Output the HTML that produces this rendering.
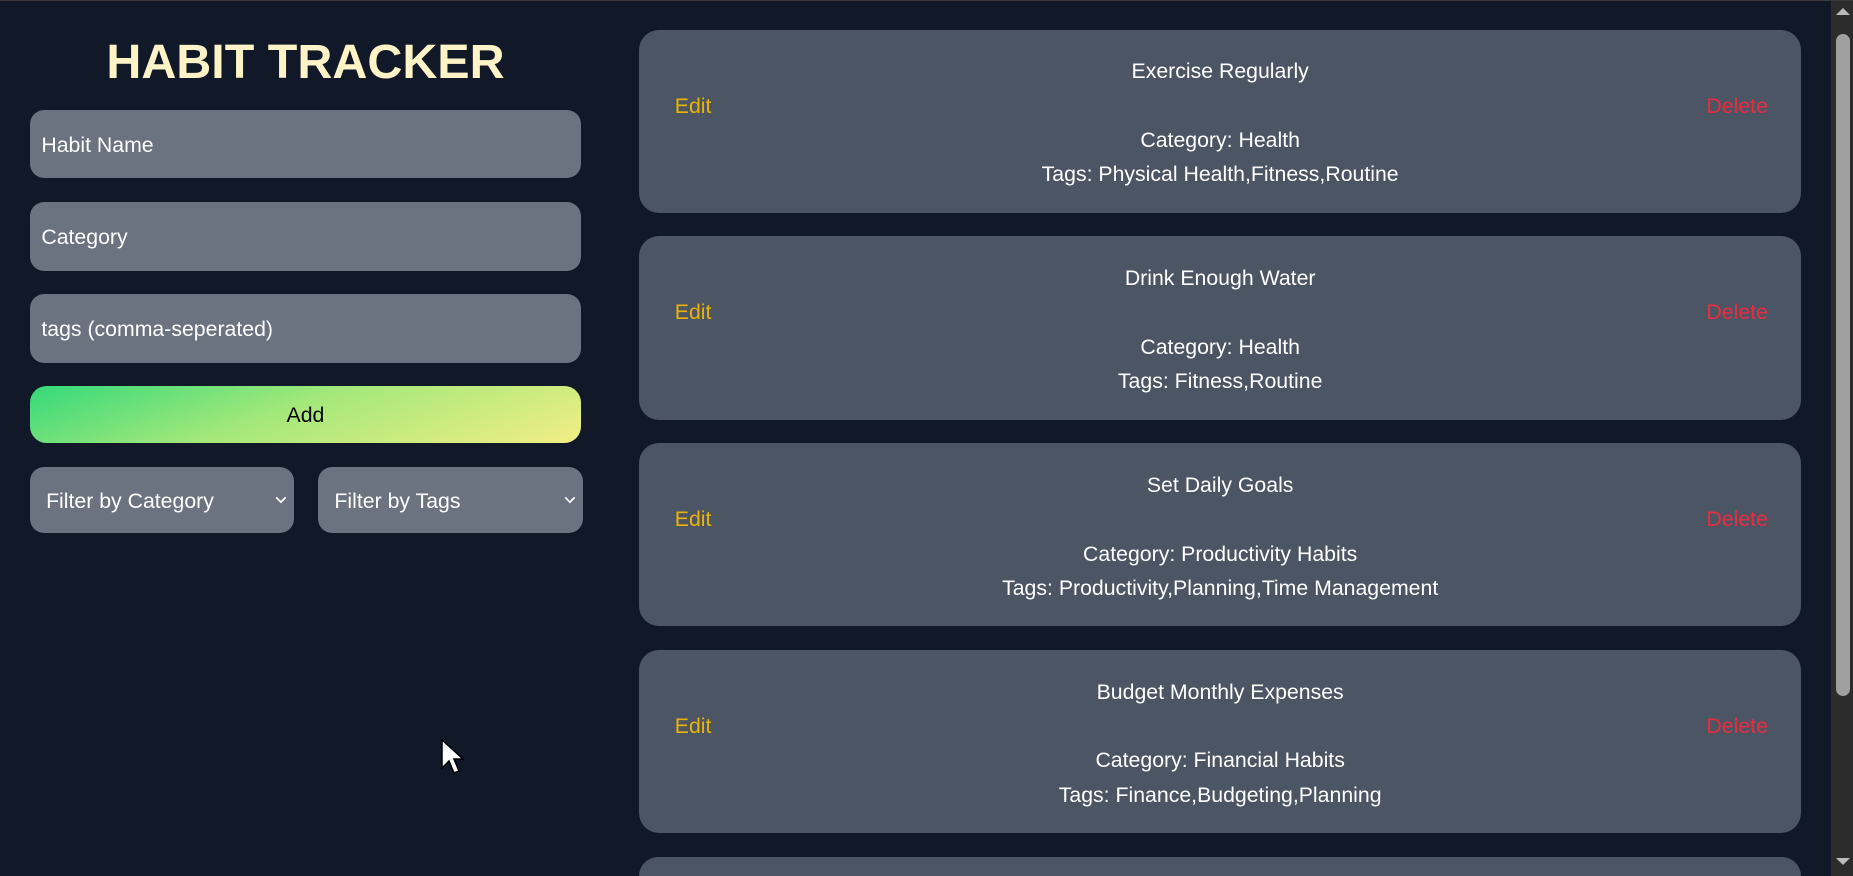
<!DOCTYPE html>
<html><head><meta charset="utf-8"><style>
html,body{margin:0;padding:0;background:#111827;overflow:hidden;width:1853px;height:876px;position:relative}
#w{zoom:1.18176;position:absolute;left:0;top:0;width:1568px;height:741px;overflow:hidden;font-family:"Liberation Sans",sans-serif;color:#fff}
h1{position:absolute;left:25px;width:467px;top:27px;margin:0;text-align:center;font-size:41px;line-height:52px;font-weight:bold;color:#fef3c7}
.in{position:absolute;left:25px;width:467px;height:58px;background:#6b7280;border-radius:12px;font-size:18px;line-height:60px;box-sizing:border-box;padding-left:10px}
.btn{position:absolute;left:25px;top:327px;width:467px;height:48px;border-radius:14px;background:linear-gradient(160deg,#34d97b 0%,#a3e87a 45%,#f2ee85 100%);color:#000;font-size:18px;line-height:50px;text-align:center}
.sel{position:absolute;top:395px;width:224px;height:56px;background:#6b7280;border-radius:12px;font-size:18px;line-height:59px;box-sizing:border-box;padding-left:14px}
.sel svg{position:absolute;right:6px;top:24px}
.card{position:absolute;left:541px;width:983px;height:155px;background:#4b5563;border-radius:17px;font-size:18px;text-align:center}
.card div{position:absolute;left:0;right:0;line-height:29px}
.e{position:absolute;left:30px;color:#eab308;line-height:29px;top:50px}
.d{position:absolute;right:28px;color:#ec2b41;line-height:29px;top:50px}
</style></head><body>
<div id="w">
<h1>HABIT TRACKER</h1>
<div class="in" style="top:93px">Habit Name</div>
<div class="in" style="top:171px">Category</div>
<div class="in" style="top:249px">tags (comma-seperated)</div>
<div class="btn">Add</div>
<div class="sel" style="left:25px">Filter by Category<svg width="10" height="8" viewBox="0 0 10 8"><path d="M1 2l4 4 4-4" stroke="#fff" stroke-width="1.5" fill="none"/></svg></div>
<div class="sel" style="left:269px">Filter by Tags<svg width="10" height="8" viewBox="0 0 10 8"><path d="M1 2l4 4 4-4" stroke="#fff" stroke-width="1.5" fill="none"/></svg></div>

<div class="card" style="top:25px"><div style="top:21px">Exercise Regularly</div><span class="e">Edit</span><span class="d">Delete</span><div style="top:79px">Category: Health</div><div style="top:108px">Tags: Physical Health,Fitness,Routine</div></div>
<div class="card" style="top:200px"><div style="top:21px">Drink Enough Water</div><span class="e">Edit</span><span class="d">Delete</span><div style="top:79px">Category: Health</div><div style="top:108px">Tags: Fitness,Routine</div></div>
<div class="card" style="top:375px"><div style="top:21px">Set Daily Goals</div><span class="e">Edit</span><span class="d">Delete</span><div style="top:79px">Category: Productivity Habits</div><div style="top:108px">Tags: Productivity,Planning,Time Management</div></div>
<div class="card" style="top:550px"><div style="top:21px">Budget Monthly Expenses</div><span class="e">Edit</span><span class="d">Delete</span><div style="top:79px">Category: Financial Habits</div><div style="top:108px">Tags: Finance,Budgeting,Planning</div></div>
<div class="card" style="top:725px;height:16px;border-radius:17px 17px 0 0"></div>
</div>
<div style="position:absolute;left:1831px;top:0;width:22px;height:876px;background:#2c2c2c"></div>
<div style="position:absolute;left:1836px;top:34px;width:14px;height:662px;background:#9f9f9f;border-radius:7px"></div>
<svg style="position:absolute;left:1836px;top:8px" width="14" height="8"><path d="M0 7L7 0L14 7Z" fill="#bbb"/></svg>
<svg style="position:absolute;left:1836px;top:858px" width="14" height="8"><path d="M0 0L7 7L14 0Z" fill="#bbb"/></svg>
<div style="position:absolute;left:0;top:0;width:1853px;height:1px;background:#3a3a3a"></div>
<svg style="position:absolute;left:440px;top:738px" width="26" height="40" viewBox="0 0 26 40"><path d="M2 2L2 30L9 23L14 35L19 33L14 21L23 21Z" fill="#fff" stroke="#000" stroke-width="1.5"/></svg>
</body></html>
